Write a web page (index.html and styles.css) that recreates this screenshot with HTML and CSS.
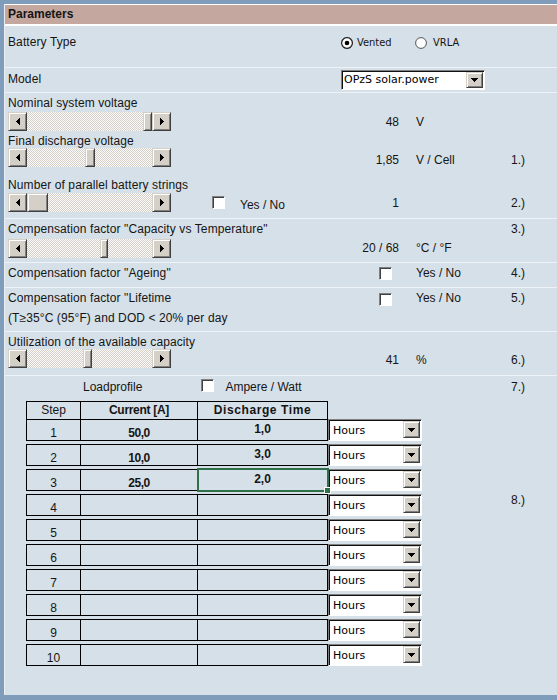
FILE: index.html
```html
<!DOCTYPE html>
<html lang="en">
<head>
<meta charset="utf-8">
<title>Parameters</title>
<link rel="stylesheet" href="styles.css">
</head>
<body>
<div class="panel">
  <div class="header">Parameters</div>

  <section class="sec s-type">
    <div class="g">
      <div class="lbl">Battery Type</div>
      <div class="radios">
        <span class="ropt ropt-first">
          <svg class="radio" width="12" height="12" viewBox="0 0 12 12"><circle cx="6" cy="6" r="5.4" fill="#fff" stroke="#2a2a2a" stroke-width="1.3"/><circle cx="6" cy="6" r="2.3" fill="#000"/></svg>
          <span class="rtext">Vented</span>
        </span>
        <span class="ropt">
          <svg class="radio" width="12" height="12" viewBox="0 0 12 12"><circle cx="6" cy="6" r="5.4" fill="#fff" stroke="#555" stroke-width="1"/></svg>
          <span class="rtext rtext-2">VRLA</span>
        </span>
      </div>
    </div>
  </section>

  <section class="sec s-model">
    <div class="g">
      <div class="lbl lbl-model">Model</div>
      <div class="dd dd-model">
        <span class="dd-t">OPzS solar.power</span>
        <span class="dd-b"><svg width="7" height="4" viewBox="0 0 7 4"><path d="M0 0h7v1h-7zM1 1h5v1h-5zM2 2h3v1h-3zM3 3h1v1h-1z" fill="#000"/></svg></span>
      </div>
    </div>
  </section>

  <section class="sec s-volt">
    <div class="g sl sl-nom">
      <div class="lbl">Nominal system voltage</div>
      <div class="sbw">
        <div class="sb">
          <span class="sbb"><svg width="4" height="7" viewBox="0 0 4 7"><path d="M3 0h1v7h-1zM2 1h1v5h-1zM1 2h1v3h-1zM0 3h1v1h-1z" fill="#000"/></svg></span>
          <span class="trk"><span class="thumb" style="margin-left:116px;width:9px"></span></span>
          <span class="sbb"><svg width="4" height="7" viewBox="0 0 4 7"><path d="M0 0h1v7h-1zM1 1h1v5h-1zM2 2h1v3h-1zM3 3h1v1h-1z" fill="#000"/></svg></span>
        </div>
      </div>
      <div class="val">48</div>
      <div class="unit">V</div>
    </div>

    <div class="g sl sl-fin">
      <div class="lbl">Final discharge voltage</div>
      <div class="sbw">
        <div class="sb">
          <span class="sbb"><svg width="4" height="7" viewBox="0 0 4 7"><path d="M3 0h1v7h-1zM2 1h1v5h-1zM1 2h1v3h-1zM0 3h1v1h-1z" fill="#000"/></svg></span>
          <span class="trk"><span class="thumb" style="margin-left:58px;width:10px"></span></span>
          <span class="sbb"><svg width="4" height="7" viewBox="0 0 4 7"><path d="M0 0h1v7h-1zM1 1h1v5h-1zM2 2h1v3h-1zM3 3h1v1h-1z" fill="#000"/></svg></span>
        </div>
      </div>
      <div class="val val-low">1,85</div>
      <div class="unit val-low">V / Cell</div>
      <div class="note val-low">1.)</div>
    </div>

    <div class="g sl sl-par">
      <div class="lbl">Number of parallel battery strings</div>
      <div class="sbw">
        <div class="sb">
          <span class="sbb"><svg width="4" height="7" viewBox="0 0 4 7"><path d="M3 0h1v7h-1zM2 1h1v5h-1zM1 2h1v3h-1zM0 3h1v1h-1z" fill="#000"/></svg></span>
          <span class="trk"><span class="thumb" style="margin-left:0px;width:21px"></span></span>
          <span class="sbb"><svg width="4" height="7" viewBox="0 0 4 7"><path d="M0 0h1v7h-1zM1 1h1v5h-1zM2 2h1v3h-1zM3 3h1v1h-1z" fill="#000"/></svg></span>
        </div>
        <span class="cb cb-par"></span>
        <span class="yn-par">Yes / No</span>
      </div>
      <div class="val">1</div>
      <div class="note">2.)</div>
    </div>
  </section>

  <section class="sec s-temp">
    <div class="g sl sl-temp">
      <div class="lbl">Compensation factor "Capacity vs Temperature"</div>
      <div class="note note-top">3.)</div>
      <div class="sbw">
        <div class="sb">
          <span class="sbb"><svg width="4" height="7" viewBox="0 0 4 7"><path d="M3 0h1v7h-1zM2 1h1v5h-1zM1 2h1v3h-1zM0 3h1v1h-1z" fill="#000"/></svg></span>
          <span class="trk"><span class="thumb" style="margin-left:73px;width:8px"></span></span>
          <span class="sbb"><svg width="4" height="7" viewBox="0 0 4 7"><path d="M0 0h1v7h-1zM1 1h1v5h-1zM2 2h1v3h-1zM3 3h1v1h-1z" fill="#000"/></svg></span>
        </div>
      </div>
      <div class="val">20 / 68</div>
      <div class="unit">°C / °F</div>
    </div>
  </section>

  <section class="sec s-age">
    <div class="g">
      <div class="lbl">Compensation factor "Ageing"</div>
      <span class="cb cb-col"></span>
      <div class="unit">Yes / No</div>
      <div class="note">4.)</div>
    </div>
  </section>

  <section class="sec s-life">
    <div class="g">
      <div class="lbl">Compensation factor "Lifetime</div>
      <span class="cb cb-col cb-life"></span>
      <div class="unit">Yes / No</div>
      <div class="note">5.)</div>
      <div class="lbl lbl-2">(T≥35°C (95°F) and DOD &lt; 20% per day</div>
    </div>
  </section>

  <section class="sec s-util">
    <div class="g sl sl-util">
      <div class="lbl">Utilization of the available capacity</div>
      <div class="sbw">
        <div class="sb">
          <span class="sbb"><svg width="4" height="7" viewBox="0 0 4 7"><path d="M3 0h1v7h-1zM2 1h1v5h-1zM1 2h1v3h-1zM0 3h1v1h-1z" fill="#000"/></svg></span>
          <span class="trk"><span class="thumb" style="margin-left:56px;width:9px"></span></span>
          <span class="sbb"><svg width="4" height="7" viewBox="0 0 4 7"><path d="M0 0h1v7h-1zM1 1h1v5h-1zM2 2h1v3h-1zM3 3h1v1h-1z" fill="#000"/></svg></span>
        </div>
      </div>
      <div class="val">41</div>
      <div class="unit">%</div>
      <div class="note">6.)</div>
    </div>
  </section>

  <section class="sec s-load">
    <div class="g g-load">
      <div class="lp">
        <span class="lp-t">Loadprofile</span>
        <span class="cb cb-lp"></span>
        <span class="lp-aw">Ampere / Watt</span>
      </div>
      <div class="note">7.)</div>

      <div class="tbl">
        <div class="thead">
          <div class="c1 h">Step</div>
          <div class="c2 h hb">Current [A]</div>
          <div class="c3 h hb hb-l">Discharge Time</div>
        </div>

        <div class="trow first">
          <div class="cells"><div class="c1">1</div><div class="c2">50,0</div><div class="c3">1,0</div></div>
          <div class="dd dd-h"><span class="dd-t">Hours</span><span class="dd-b"><svg width="7" height="4" viewBox="0 0 7 4"><path d="M0 0h7v1h-7zM1 1h5v1h-5zM2 2h3v1h-3zM3 3h1v1h-1z" fill="#000"/></svg></span></div>
        </div>
        <div class="trow">
          <div class="cells"><div class="c1">2</div><div class="c2">10,0</div><div class="c3">3,0</div></div>
          <div class="dd dd-h"><span class="dd-t">Hours</span><span class="dd-b"><svg width="7" height="4" viewBox="0 0 7 4"><path d="M0 0h7v1h-7zM1 1h5v1h-5zM2 2h3v1h-3zM3 3h1v1h-1z" fill="#000"/></svg></span></div>
        </div>
        <div class="trow">
          <div class="cells"><div class="c1">3</div><div class="c2">25,0</div><div class="c3 sel">2,0</div></div>
          <div class="dd dd-h"><span class="dd-t">Hours</span><span class="dd-b"><svg width="7" height="4" viewBox="0 0 7 4"><path d="M0 0h7v1h-7zM1 1h5v1h-5zM2 2h3v1h-3zM3 3h1v1h-1z" fill="#000"/></svg></span></div>
        </div>
        <div class="trow">
          <div class="cells"><div class="c1">4</div><div class="c2"></div><div class="c3"></div></div>
          <div class="dd dd-h"><span class="dd-t">Hours</span><span class="dd-b"><svg width="7" height="4" viewBox="0 0 7 4"><path d="M0 0h7v1h-7zM1 1h5v1h-5zM2 2h3v1h-3zM3 3h1v1h-1z" fill="#000"/></svg></span></div>
        </div>
        <div class="trow">
          <div class="cells"><div class="c1">5</div><div class="c2"></div><div class="c3"></div></div>
          <div class="dd dd-h"><span class="dd-t">Hours</span><span class="dd-b"><svg width="7" height="4" viewBox="0 0 7 4"><path d="M0 0h7v1h-7zM1 1h5v1h-5zM2 2h3v1h-3zM3 3h1v1h-1z" fill="#000"/></svg></span></div>
        </div>
        <div class="trow">
          <div class="cells"><div class="c1">6</div><div class="c2"></div><div class="c3"></div></div>
          <div class="dd dd-h"><span class="dd-t">Hours</span><span class="dd-b"><svg width="7" height="4" viewBox="0 0 7 4"><path d="M0 0h7v1h-7zM1 1h5v1h-5zM2 2h3v1h-3zM3 3h1v1h-1z" fill="#000"/></svg></span></div>
        </div>
        <div class="trow">
          <div class="cells"><div class="c1">7</div><div class="c2"></div><div class="c3"></div></div>
          <div class="dd dd-h"><span class="dd-t">Hours</span><span class="dd-b"><svg width="7" height="4" viewBox="0 0 7 4"><path d="M0 0h7v1h-7zM1 1h5v1h-5zM2 2h3v1h-3zM3 3h1v1h-1z" fill="#000"/></svg></span></div>
        </div>
        <div class="trow">
          <div class="cells"><div class="c1">8</div><div class="c2"></div><div class="c3"></div></div>
          <div class="dd dd-h"><span class="dd-t">Hours</span><span class="dd-b"><svg width="7" height="4" viewBox="0 0 7 4"><path d="M0 0h7v1h-7zM1 1h5v1h-5zM2 2h3v1h-3zM3 3h1v1h-1z" fill="#000"/></svg></span></div>
        </div>
        <div class="trow">
          <div class="cells"><div class="c1">9</div><div class="c2"></div><div class="c3"></div></div>
          <div class="dd dd-h"><span class="dd-t">Hours</span><span class="dd-b"><svg width="7" height="4" viewBox="0 0 7 4"><path d="M0 0h7v1h-7zM1 1h5v1h-5zM2 2h3v1h-3zM3 3h1v1h-1z" fill="#000"/></svg></span></div>
        </div>
        <div class="trow">
          <div class="cells"><div class="c1">10</div><div class="c2"></div><div class="c3"></div></div>
          <div class="dd dd-h"><span class="dd-t">Hours</span><span class="dd-b"><svg width="7" height="4" viewBox="0 0 7 4"><path d="M0 0h7v1h-7zM1 1h5v1h-5zM2 2h3v1h-3zM3 3h1v1h-1z" fill="#000"/></svg></span></div>
        </div>
      </div>

      <div class="note note-8">8.)</div>
    </div>
  </section>
</div>
</body>
</html>
```

FILE: styles.css
```css
* { box-sizing: border-box; }
html, body { margin: 0; padding: 0; }
body {
  width: 557px;
  height: 700px;
  overflow: hidden;
  background: #7f9dba;
  font-family: "Liberation Sans", Arial, sans-serif;
  font-size: 12px;
  color: #151515;
}

.panel {
  margin: 4px 0 0 4px;
  height: 691px;
  background: #d6e0e8;
  border-left: 1px solid #e8eef3;
}

.header {
  height: 22px;
  border-top: 1px solid #fff;
  border-bottom: 2px solid #fff;
  background: #c4a89f;
  font-weight: bold;
  line-height: 19px;
  padding-left: 3px;
}

.sec {
  border-bottom: 1px solid #eef3f7;
  padding-left: 3px;
}

.g {
  display: grid;
  grid-template-columns: 332px 59px 17px 95px 1fr;
  align-items: start;
}

.lbl { grid-column: 1; line-height: 14px; white-space: nowrap; letter-spacing: 0.1px; }
.val { grid-column: 2; text-align: right; line-height: 14px; white-space: nowrap; }
.unit { grid-column: 4; line-height: 14px; white-space: nowrap; }
.note { grid-column: 5; line-height: 14px; }

/* Battery type */
.s-type { height: 42px; padding-top: 9px; }
.radios {
  grid-column: 2 / 6;
  display: flex;
  align-items: center;
  margin: 2px 0 0 1px;
  height: 12px;
}
.ropt { display: flex; align-items: center; }
.ropt-first { width: 74px; }
.radio { display: block; }
.rtext {
  font-family: "DejaVu Sans Condensed", "DejaVu Sans", sans-serif;
  font-size: 11px;
  margin-left: 4px;
  line-height: 12px;
}
.rtext-2 { margin-left: 6px; }

/* Model */
.s-model { height: 25px; padding-top: 2px; }
.lbl-model { margin-top: 2px; }
.dd {
  display: flex;
  background: #fff;
  border: 1px solid;
  border-color: #808080 #fff #fff #808080;
  box-shadow: inset 1px 1px 0 #111;
}
.dd-t {
  flex: 1;
  font-family: "DejaVu Sans", sans-serif;
  font-size: 11px;
  padding-left: 3px;
  white-space: nowrap;
  overflow: hidden;
  color: #000;
}
.dd-b {
  width: 17px;
  flex: none;
  margin: 1px 1px 1px 0;
  background: #d4d0c8;
  border: 1px solid;
  border-color: #d4d0c8 #404040 #404040 #d4d0c8;
  box-shadow: inset 1px 1px 0 #fff, inset -1px -1px 0 #808080;
  display: flex;
  align-items: center;
  justify-content: center;
}
.dd-b svg { display: block; }
.dd-model {
  grid-column: 2 / 6;
  width: 144px;
  height: 20px;
  margin-left: 1px;
}
.dd-model .dd-t { line-height: 18px; padding-left: 2px; }
.dd-model .dd-b { height: 16px; }

/* sliders */
.sl { grid-template-rows: 14px auto; }
.sbw { grid-column: 1; grid-row: 2; display: flex; align-items: center; }
.sl .val, .sl .unit { grid-row: 2; align-self: center; margin-top: 2px; }
.sl .note { grid-row: 2; align-self: center; margin-top: 2px; }
.sl .note-top { grid-row: 1; margin-top: 0; }
.val-low { margin-top: 5px !important; }

.sb { display: flex; width: 163px; height: 19px; }
.sbb {
  width: 19px;
  height: 19px;
  background: #d4d0c8;
  border: 1px solid;
  border-color: #d4d0c8 #404040 #404040 #d4d0c8;
  box-shadow: inset 1px 1px 0 #fff, inset -1px -1px 0 #808080;
  display: flex;
  align-items: center;
  justify-content: center;
}
.sbb svg { display: block; }
.trk {
  flex: 1;
  display: flex;
  background: repeating-conic-gradient(#d4d0c8 0 25%, #fbfbfb 0 50%) 0 0 / 2px 2px;
}
.thumb {
  height: 19px;
  background: #d4d0c8;
  border: 1px solid;
  border-color: #d4d0c8 #404040 #404040 #d4d0c8;
  box-shadow: inset 1px 1px 0 #fff, inset -1px -1px 0 #808080;
}

.s-volt { height: 126px; padding-top: 3px; }
.sl-nom .sbw { margin-top: 2px; }
.sl-fin { margin-top: 3px; }
.sl-fin .sbw { margin-top: 0; }
.sl-par { margin-top: 11px; }
.sl-par .sbw { margin-top: 1px; }

.cb {
  display: block;
  width: 13px;
  height: 13px;
  background: #fff;
  border: 1px solid;
  border-color: #808080 #fff #fff #808080;
  box-shadow: inset 1px 1px 0 #404040;
}
.cb-par { margin-left: 41px; }
.yn-par { margin-left: 15px; line-height: 14px; margin-top: 4px; }

.s-temp { height: 44px; padding-top: 3px; }
.sl-temp .sbw { margin-top: 3px; }

.s-age { height: 25px; padding-top: 3px; }
.cb-col { grid-column: 2; margin: 1px 0 0 39px; }

.s-life { height: 44px; padding-top: 3px; }
.cb-life { margin-top: 2px; }
.lbl-2 { grid-column: 1 / 6; margin-top: 5px; }

.s-util { height: 44px; padding-top: 3px; }
.sl-util .sbw { margin-top: 0; }

/* load profile */
.s-load { border-bottom: 0; padding-top: 4px; }
.lp { grid-column: 1 / 5; display: flex; align-items: flex-start; line-height: 14px; }
.lp-t { margin-left: 75px; }
.cb-lp { margin: -1px 0 0 59px; }
.lp-aw { margin-left: 11px; }

.tbl { grid-column: 1 / 5; grid-row: 2; margin: 7px 0 0 18px; }
.note-8 { grid-row: 2; margin-top: 99px; }

.thead {
  display: flex;
  width: 302px;
  height: 18px;
  border: 1px solid #000;
  border-bottom: 0;
}
.trow { display: flex; height: 22px; margin-top: 3px; }
.trow.first { margin-top: 0; }
.cells {
  display: flex;
  width: 302px;
  height: 22px;
  border: 1px solid #000;
}
.c1 { width: 53px; text-align: center; padding-top: 6px; line-height: 14px; }
.c2 {
  width: 117px;
  border-left: 1px solid #000;
  text-align: center;
  font-weight: bold;
  font-size: 12px;
  letter-spacing: -0.5px;
  padding-top: 6px;
  line-height: 14px;
}
.c3 {
  width: 130px;
  border-left: 1px solid #000;
  text-align: center;
  font-weight: bold;
  padding-top: 2px;
  line-height: 14px;
}
.thead .h { padding-top: 0; line-height: 17px; }
.thead .c1 { font-weight: normal; font-size: 12px; }
.thead .hb { font-weight: bold; font-size: 12px; letter-spacing: -0.3px; }
.thead .hb-l { font-size: 12px; letter-spacing: 0.6px; }

.c3.sel { position: relative; }
.c3.sel::after {
  content: "";
  position: absolute;
  left: -1px;
  top: -2px;
  right: -2px;
  bottom: -2px;
  border: 2px solid #2f6f4a;
}
.c3.sel::before {
  content: "";
  position: absolute;
  right: -4px;
  bottom: -4px;
  width: 5px;
  height: 5px;
  background: #2f6f4a;
  border: 1px solid #fff;
  z-index: 1;
}

.dd-h { width: 94px; height: 22px; }
.dd-h .dd-t { line-height: 20px; padding-left: 4px; padding-top: 1px; }
.dd-h .dd-b { height: 17px; }
```
